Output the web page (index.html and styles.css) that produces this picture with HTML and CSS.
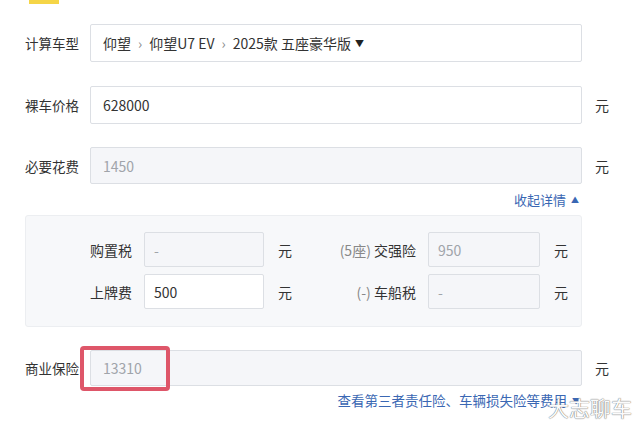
FILE: index.html
```html
<!DOCTYPE html>
<html lang="zh-CN">
<head>
<meta charset="utf-8">
<link rel="stylesheet" href="styles.css">
</head>
<body>
<div class="page">
  <div class="tabbar"><span class="tab-mark"></span></div>
  <div class="form">
    <div class="row row-model">
      <label class="label">计算车型</label>
      <div class="field">
        <span>仰望</span><span class="sep">›</span><span>仰望U7 EV</span><span class="sep">›</span><span>2025款 五座豪华版</span><span class="caret">▼</span>
      </div>
      <span class="unit"></span>
    </div>
    <div class="row">
      <label class="label">裸车价格</label>
      <div class="field">628000</div>
      <span class="unit">元</span>
    </div>
    <div class="row row-need">
      <label class="label">必要花费</label>
      <div class="field disabled">1450</div>
      <span class="unit">元</span>
    </div>
    <div class="toggle-line"><a class="link">收起详情 <span class="tri">▲</span></a></div>
    <div class="panel">
      <div class="prow">
        <div class="pgroup left">
          <span class="plabel">购置税</span>
          <div class="pfield disabled">-</div>
          <span class="punit">元</span>
        </div>
        <div class="pgroup right">
          <span class="plabel"><span class="note">(5座)</span> 交强险</span>
          <div class="pfield disabled">950</div>
          <span class="punit">元</span>
        </div>
      </div>
      <div class="prow">
        <div class="pgroup left">
          <span class="plabel">上牌费</span>
          <div class="pfield">500</div>
          <span class="punit">元</span>
        </div>
        <div class="pgroup right">
          <span class="plabel"><span class="note">(-)</span> 车船税</span>
          <div class="pfield disabled">-</div>
          <span class="punit">元</span>
        </div>
      </div>
    </div>
    <div class="row row-ins">
      <label class="label">商业保险</label>
      <div class="field disabled">13310</div>
      <span class="unit">元</span>
      <span class="highlight"></span>
    </div>
    <div class="link-line"><a class="link link-big">查看第三者责任险、车辆损失险等费用 <span class="tri">▼</span></a></div>
  </div>
  <div class="watermark">大志聊车</div>
</div>
</body>
</html>
```
FILE: styles.css
```css
* { box-sizing: border-box; }
html, body { margin: 0; padding: 0; background: #fff; }
body {
  font-family: "Noto Sans CJK SC", "Microsoft YaHei", sans-serif;
  font-size: 14px;
  color: #333;
}
.page { position: relative; width: 640px; height: 432px; overflow: hidden; }
.tabbar { height: 4px; padding-left: 29px; }
.tab-mark { display: block; width: 30px; height: 4px; background: #f5d547; }
.form { padding: 20px 0 0 25px; width: 640px; }
.row { display: flex; align-items: center; position: relative; }
.row + .row { margin-top: 24px; }
.row.row-need { margin-top: 23px; }
.label { width: 65px; flex: none; white-space: nowrap; color: #333; font-size: 13.5px; }
.field {
  width: 492px; height: 38px; flex: none;
  border: 1px solid #dcdfe4; border-radius: 2px;
  padding: 0 12px; display: flex; align-items: center;
  background: #fff; color: #333; white-space: nowrap;
}
.field.disabled { background: #f5f6f9; color: #a0a4aa; height: 37px; }
.sep { color: #888; margin: 0 7px; }
.caret { font-size: 9px; margin-left: 4px; color: #222; }
.unit { margin-left: 13px; color: #333; }
.toggle-line { width: 557px; text-align: right; padding-right: 3px; margin-top: 5px; height: 26px; line-height: 20px; }
.link { color: #3a67b3; font-size: 13px; text-decoration: none; }
.link-big { font-size: 13.5px; }
.tri { font-size: 8px; vertical-align: 2px; margin-left: 2px; }
.panel {
  width: 557px; background: #f7f8fa; border: 1px solid #eceef1; border-radius: 3px;
  padding: 16px 0 17px 0;
}
.prow { display: flex; align-items: center; }
.prow + .prow { margin-top: 7px; }
.pgroup { display: flex; align-items: center; }
.pgroup.left .plabel { width: 106px; }
.pgroup.right .plabel { width: 124px; }
.pgroup.right .pfield { width: 112px; }
.plabel { text-align: right; margin-right: 12px; white-space: nowrap; color: #333; }
.note { color: #888; }
.pfield {
  width: 120px; height: 35px; border: 1px solid #dcdfe4; border-radius: 2px;
  background: #fff; padding: 0 9px; display: flex; align-items: center; color: #333;
}
.pfield.disabled { background: #f5f6f9; color: #a0a4aa; }
.punit { margin-left: 14px; width: 14px; color: #333; }
.row.row-ins { margin-top: 23px; }
.row-ins .field { height: 36px; }
.highlight {
  position: absolute; left: 55px; top: -4px; width: 90px; height: 45px;
  border: 4px solid #de5669; border-radius: 4px;
}
.link-line { width: 557px; text-align: right; padding-right: 2px; margin-top: 4px; line-height: 20px; }
.watermark {
  position: absolute; left: 548px; top: 392px;
  font-size: 21px; color: #fbfbfb;
  text-shadow: 0 0 1px #777, 0 0 1px #777;
  font-family: "Noto Sans CJK SC", sans-serif;
}
```
